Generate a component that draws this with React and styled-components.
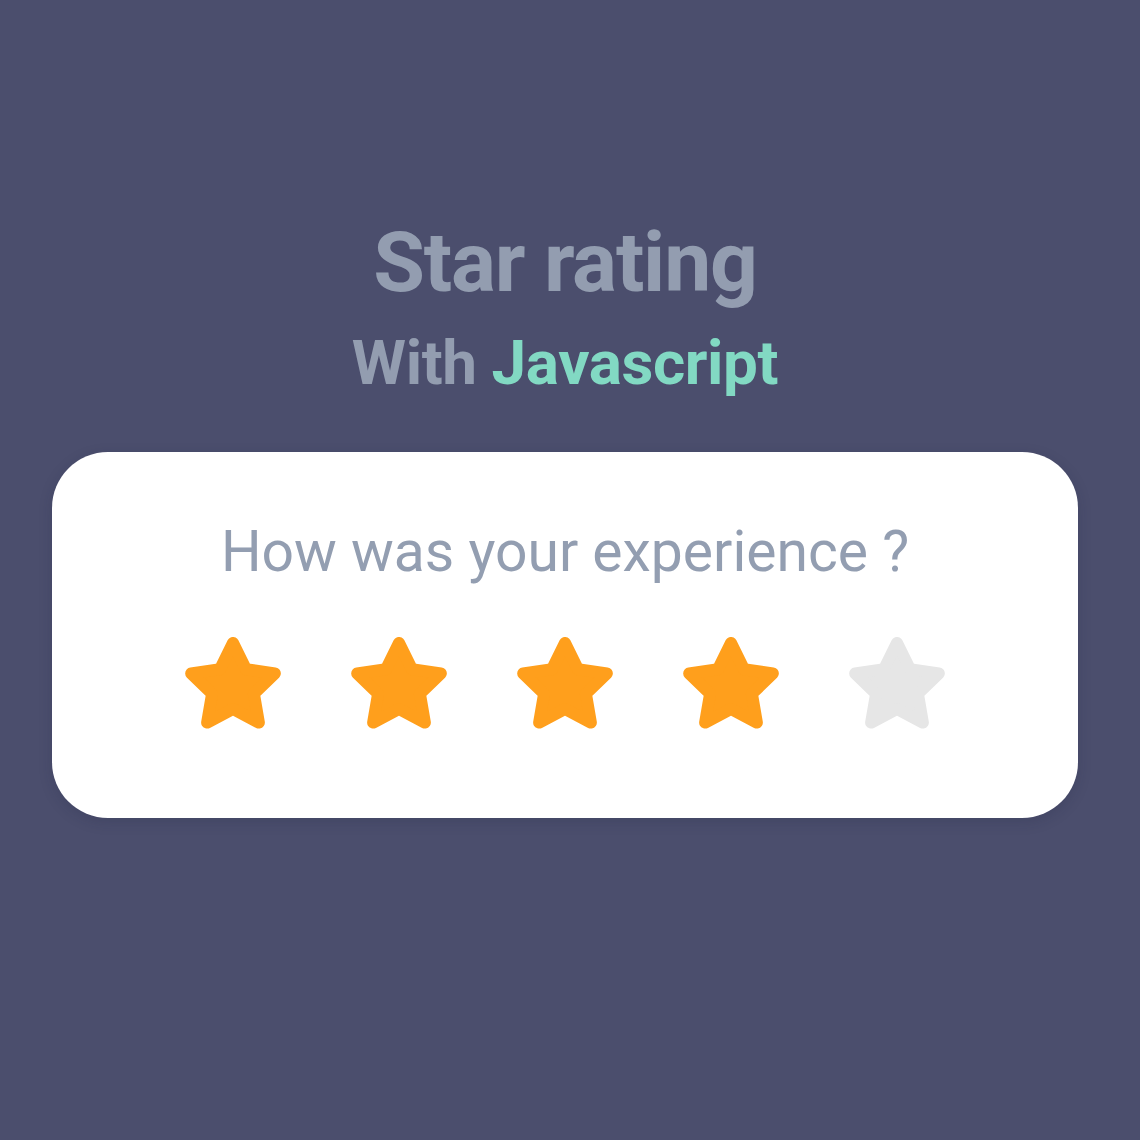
import styled, { createGlobalStyle } from 'styled-components';

const GlobalStyle = createGlobalStyle`
html, body {
  margin:0;
  padding:0;
  background:#4b4e6d;
}
body {
  font-family:Roboto, "Liberation Sans", sans-serif;
}`;

const Page = styled.div`
width:1130px;
height:1140px;
display:flex;
flex-direction:column;
align-items:center;
padding-top:213px;
box-sizing:border-box;`;

const Title = styled.h1`
margin:0;
font-size:84px;
font-weight:700;
line-height:100px;
letter-spacing:-1.2px;
color:#939db0;`;

const Subtitle = styled.h2`
margin:0;
font-size:62px;
font-weight:700;
line-height:80px;
letter-spacing:-0.4px;
margin-top:10px;
color:#939db0;`;

const Accent = styled.span`
color:#82d9c3;`;

const Card = styled.div`
margin-top:49px;
width:1026px;
height:366px;
background:#fff;
border-radius:56px;
box-shadow:0 4px 14px rgba(30, 32, 60, 0.18);
display:flex;
flex-direction:column;
align-items:center;
padding-top:60px;
box-sizing:border-box;`;

const Question = styled.p`
margin:0;
font-size:57px;
font-weight:400;
line-height:80px;
color:#939eb1;`;

const Stars = styled.div`
display:flex;
gap:66px;
margin-top:45px;`;

const StarIcon = styled.svg`
width:100px;
height:100px;
display:block;
cursor:pointer;
polygon {
  fill:${p => (p.$on ? '#ff9f1c' : '#e6e6e6')};
  stroke:${p => (p.$on ? '#ff9f1c' : '#e6e6e6')};
}`;

const starPoints = (() => {
  const pts = [];
  for (let i = 0; i < 10; i++) {
    const r = i % 2 === 0 ? 44 : 22;
    const a = (Math.PI / 5) * i - Math.PI / 2;
    pts.push(`${(r * Math.cos(a)).toFixed(2)},${(r * Math.sin(a)).toFixed(2)}`);
  }
  return pts.join(' ');
})();

const Star = ({ on }) => (
  <StarIcon $on={on} viewBox="-50 -50 100 100">
    <polygon points={starPoints} strokeWidth="12" strokeLinejoin="round" />
  </StarIcon>
);

const App = () => {
  const rating = 4;
  return (
    <>
      <GlobalStyle />
      <Page>
        <Title>Star rating</Title>
        <Subtitle>With <Accent>Javascript</Accent></Subtitle>
        <Card>
          <Question>How was your experience ?</Question>
          <Stars>
            {[1, 2, 3, 4, 5].map(n => <Star key={n} on={n <= rating} />)}
          </Stars>
        </Card>
      </Page>
    </>
  );
};

export default App;
